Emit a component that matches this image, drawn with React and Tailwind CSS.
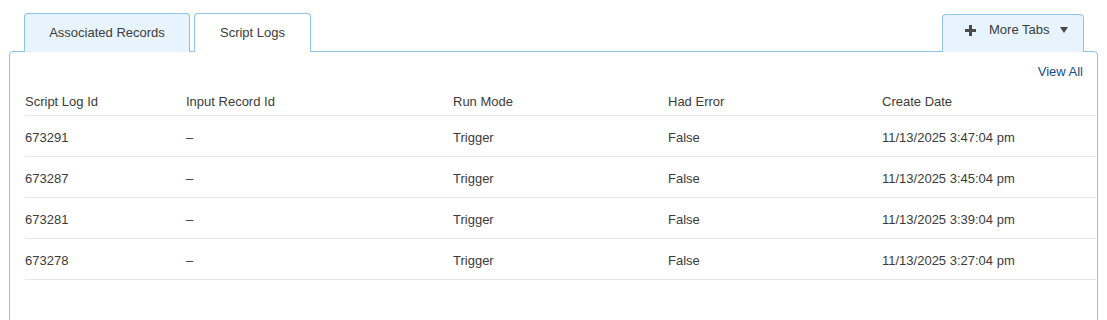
import React from 'react';

const rows = [
  { id: '673291', input: '–', mode: 'Trigger', error: 'False', date: '11/13/2025 3:47:04 pm' },
  { id: '673287', input: '–', mode: 'Trigger', error: 'False', date: '11/13/2025 3:45:04 pm' },
  { id: '673281', input: '–', mode: 'Trigger', error: 'False', date: '11/13/2025 3:39:04 pm' },
  { id: '673278', input: '–', mode: 'Trigger', error: 'False', date: '11/13/2025 3:27:04 pm' },
];

function Row({ cells, header }) {
  return (
    <div className={`flex items-center border-b border-[#e6e6e6] ${header ? 'h-[28px]' : 'h-[41px] pt-[3px]'}`}>
      <div className="w-[161px]">{cells[0]}</div>
      <div className="w-[267px]">{cells[1]}</div>
      <div className="w-[215px]">{cells[2]}</div>
      <div className="w-[214px]">{cells[3]}</div>
      <div className="flex-1">{cells[4]}</div>
    </div>
  );
}

export default function App() {
  return (
    <div className="h-[320px] overflow-hidden bg-white px-[9px] pt-[13px] text-[13px] text-[#3b3b3b] font-['Liberation_Sans',Arial,sans-serif]">
      <div className="flex items-end pl-[15px] pr-[14px]">
        <div className="relative z-10 -mb-px flex h-[39px] w-[166px] items-center justify-center rounded-t-[4px] border border-b-0 border-[#8fc4e8] bg-[#e8f4fd] pb-[1px]">
          Associated Records
        </div>
        <div className="relative z-10 -mb-px ml-[4px] flex h-[39px] w-[117px] items-center justify-center rounded-t-[4px] border border-b-0 border-[#8fc4e8] bg-white pb-[1px]">
          Script Logs
        </div>
        <div className="relative z-10 -mb-px ml-auto flex h-[38px] w-[142px] items-center rounded-t-[4px] border border-b-0 border-[#8fc4e8] bg-[#e8f4fd] pb-[7px] pl-[22px]">
          <svg width="11" height="11" viewBox="0 0 11 11">
            <path d="M4 0h3v4h4v3H7v4H4V7H0V4h4z" fill="#4a4a4a" />
          </svg>
          <span className="ml-[13px]">More Tabs</span>
          <svg width="8" height="6" viewBox="0 0 8 6" className="ml-[11px]">
            <path d="M0 0h8L4 6z" fill="#4a4a4a" />
          </svg>
        </div>
      </div>
      <div className="h-[300px] rounded-tl-[4px] rounded-tr-[4px] border border-[#8fc4e8] bg-white pl-[15px] pr-[1px]">
        <div className="flex justify-end pr-[13px] pt-[12px] leading-[16px] text-[#1a4a8a]">View All</div>
        <div className="mt-[8px]">
          <Row header cells={['Script Log Id', 'Input Record Id', 'Run Mode', 'Had Error', 'Create Date']} />
          {rows.map(r => (
            <Row key={r.id} cells={[r.id, r.input, r.mode, r.error, r.date]} />
          ))}
        </div>
      </div>
    </div>
  );
}
